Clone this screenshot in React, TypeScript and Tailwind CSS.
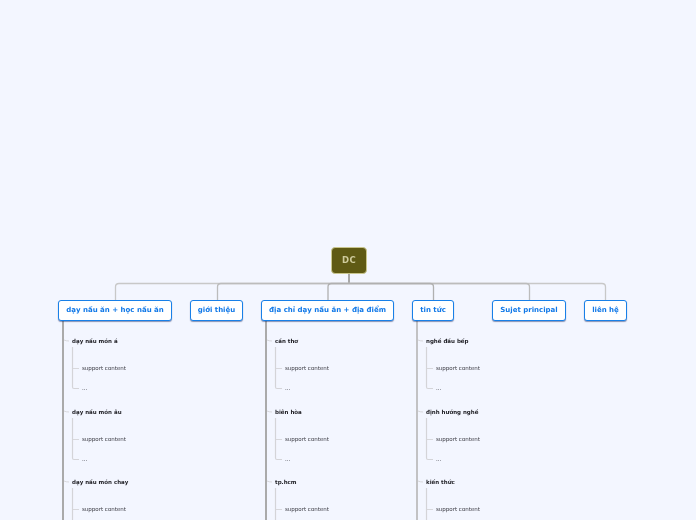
const topics = [
  { label: "dạy nấu ăn + học nấu ăn", w: "w-[114px]", items: ["dạy nấu món á", "dạy nấu món âu", "dạy nấu món chay"] },
  { label: "giới thiệu", w: "w-[53px]", items: [] },
  { label: "địa chỉ dạy nấu ăn + địa điểm", w: "w-[133px]", items: ["cần thơ", "biên hòa", "tp.hcm"] },
  { label: "tin tức", w: "w-[42px] mr-[20px]", items: ["nghề đầu bếp", "định hướng nghề", "kiến thức"] },
  { label: "Sujet principal", w: "w-[74px]", items: [] },
  { label: "liên hệ", w: "w-[43px]", items: [] },
];

const spines = [
  { x: 63, color: "#aaaaaa" },
  { x: 266, color: "#aaaaaa" },
  { x: 417, color: "#c2c2c4" },
];
const rows = [341, 412, 482];

function Connectors() {
  return (
    <svg className="absolute left-0 top-0" width="696" height="520" fill="none">
      <path d="M349 274V283" stroke="#a8a8a8" strokeWidth="2" />
      <path d="M115.5 300V287Q115.5 283.5 119 283.5H602Q605.5 283.5 605.5 287V300" stroke="#c8c8c8" strokeWidth="1.3" />
      <path d="M217.5 300V287Q217.5 283.5 221 283.5H526Q529.5 283.5 529.5 287V300" stroke="#bcbcbc" strokeWidth="1.3" />
      <path d="M328 300V287Q328 283.5 331.5 283.5H430Q433.5 283.5 433.5 287V300" stroke="#b0b0b0" strokeWidth="1.3" />
      {spines.map((c) => (
        <g key={c.x}>
          <path d={`M${c.x} 321V520`} stroke={c.color} strokeWidth="2" />
          {rows.map((y) => (
            <g key={y}>
              <path d={`M${c.x + 1} ${y - 1}Q${c.x + 3} ${y} ${c.x + 6} ${y}`} stroke="#d8d8dc" strokeWidth="1" />
              <path d={`M${c.x + 9.5} ${y + 6}V${y + 46}Q${c.x + 9.5} ${y + 47.5} ${c.x + 11} ${y + 47.5}H${c.x + 16}`} stroke="#d4d4d8" strokeWidth="1.2" />
              <path d={`M${c.x + 10} ${y + 27.5}H${c.x + 16}`} stroke="#d8d8dc" strokeWidth="1" />
            </g>
          ))}
        </g>
      ))}
    </svg>
  );
}

export default function App() {
  return (
    <div className="relative flex flex-col w-[696px] h-[520px] overflow-hidden bg-[#f3f6ff] pt-[247px] font-['DejaVu_Sans',sans-serif] blur-[0.35px]">
      <Connectors />
      <div className="relative shrink-0 ml-[331px] w-[36px] h-[27px] flex items-center justify-center rounded-[4px] bg-[#5f5a14] border-[1.5px] border-[#c9c68e] text-[8.5px] font-bold text-[#cfcb9c] tracking-[0.3px]">
        DC
      </div>
      <div className="relative shrink-0 flex items-start gap-[18px] pl-[58px] mt-[26px]">
        {topics.map((t) => (
          <div key={t.label} className={`flex flex-col shrink-0 ${t.w}`}>
            <div className="h-[21px] shrink-0 flex items-center justify-center rounded-[3px] bg-white border-[1.5px] border-[#1880e8] shadow-[0_1px_1px_rgba(30,50,110,0.5)] text-[7px] font-bold text-[#1078e8] whitespace-nowrap">
              {t.label}
            </div>
            <div className="flex flex-col pt-[15px] pl-[14px]">
              {t.items.map((item, i) => (
                <div key={item} className="flex flex-col h-[70.5px] shrink-0 text-[5.5px] leading-[10px] whitespace-nowrap">
                  <div className="font-bold text-[#1c1c22]">{item}</div>
                  <div className="ml-[10px] mt-[17px] text-[#3a3a42]">support content</div>
                  {i < 2 && <div className="ml-[10px] mt-[10px] text-[#3a3a42]">...</div>}
                </div>
              ))}
            </div>
          </div>
        ))}
      </div>
    </div>
  );
}
